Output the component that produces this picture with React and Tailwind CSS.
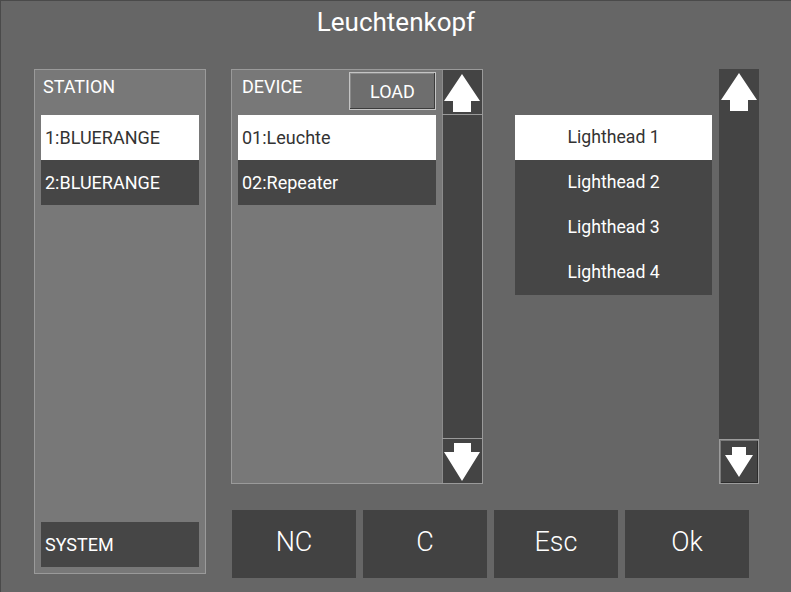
import React from 'react'

const font = { fontFamily: 'Roboto, "Noto Sans", sans-serif' }

function ArrowUp() {
  return (
    <svg width="40" height="45" viewBox="0 0 40 45" className="block">
      <polygon points="20,4 38,31 29,31 29,42 11,42 11,31 2,31" fill="white" />
    </svg>
  )
}

function ArrowDown() {
  return (
    <svg width="40" height="45" viewBox="0 0 40 45" className="block">
      <polygon points="12,4 29,4 29,13 38,13 20,42 2,13 12,13" fill="white" />
    </svg>
  )
}

function SmallArrowDown() {
  return (
    <svg width="38" height="43" viewBox="0 0 38 43" className="block">
      <polygon points="12,7 26,7 26,15 33,15 19,37 5,15 12,15" fill="white" />
    </svg>
  )
}

function Item({ label, active }) {
  return (
    <div
      className={`h-[45px] flex items-center pl-[4px] text-[18px] ${
        active ? 'bg-white text-[#333]' : 'bg-[#464646] text-white'
      }`}
    >
      {label}
    </div>
  )
}

export default function App() {
  const heads = ['Lighthead 1', 'Lighthead 2', 'Lighthead 3', 'Lighthead 4']

  return (
    <div
      className="w-[791px] h-[592px] bg-[#666] border-t border-l border-[#4a4a4a] flex flex-col text-white overflow-hidden"
      style={font}
    >
      <div className="h-[43px] flex items-center justify-center text-[26px]">Leuchtenkopf</div>

      <div className="mt-[25px] flex pl-[33px]">
        {/* station column */}
        <div className="w-[172px] h-[505px] border border-[#9a9a9a] bg-[#787878] flex flex-col px-[6px] pb-[6px]">
          <div className="h-[45px] pt-[6px] pl-[2px] text-[18px] leading-[21px]">STATION</div>
          <Item label="1:BLUERANGE" active />
          <Item label="2:BLUERANGE" />
          <div className="flex-1" />
          <Item label="SYSTEM" />
        </div>

        <div className="ml-[25px] flex flex-col">
          <div className="flex items-start">
            {/* device panel */}
            <div className="w-[252px] h-[415px] border border-[#9a9a9a] flex">
              <div className="flex-1 bg-[#787878] pl-[6px] pr-[6px] flex flex-col">
                <div className="h-[45px] flex justify-between">
                  <div className="pt-[6px] pl-[4px] text-[18px] leading-[21px]">DEVICE</div>
                  <div className="mt-[2px] w-[87px] h-[38px] border border-[#c4c4c4] bg-[#6e6e6e] shadow-[inset_-1px_-1px_0_#3c3c3c,inset_1px_1px_0_#8a8a8a] flex items-center justify-center text-[18px]">
                    LOAD
                  </div>
                </div>
                <Item label="01:Leuchte" active />
                <Item label="02:Repeater" />
              </div>
              <div className="w-[40px] bg-[#444] border-l border-[#8c8c8c] flex flex-col">
                <div className="h-[45px] border-b border-[#9a9a9a] -ml-[1px]">
                  <ArrowUp />
                </div>
                <div className="flex-1" />
                <div className="h-[45px] border-t border-[#9a9a9a] -ml-[1px]">
                  <ArrowDown />
                </div>
              </div>
            </div>

            {/* lighthead list */}
            <div className="ml-[32px] mt-[46px] w-[197px] flex flex-col">
              {heads.map((h, i) => (
                <div
                  key={h}
                  className={`h-[45px] flex items-center justify-center ${
                    i === 0 ? 'bg-white text-[#333]' : 'bg-[#464646] text-white'
                  }`}
                >
                  <span className="inline-block text-[19px] scale-x-[0.93]">{h}</span>
                </div>
              ))}
            </div>

            {/* right scrollbar */}
            <div className="ml-[7px] w-[40px] h-[415px] bg-[#444] flex flex-col justify-between">
              <ArrowUp />
              <div className="h-[45px] border border-[#9c9c9c] shadow-[inset_1px_1px_0_#7a7a7a,inset_-1px_-1px_0_#2c2c2c]">
                <SmallArrowDown />
              </div>
            </div>
          </div>

          <div className="mt-[26px] ml-[1px] flex gap-[7px]">
            {['NC', 'C', 'Esc', 'Ok'].map((b) => (
              <div
                key={b}
                className="w-[124px] h-[68px] bg-[#424242] flex items-center justify-center text-[27px] font-light pb-[4px]"
              >
                {b}
              </div>
            ))}
          </div>
        </div>
      </div>
    </div>
  )
}
